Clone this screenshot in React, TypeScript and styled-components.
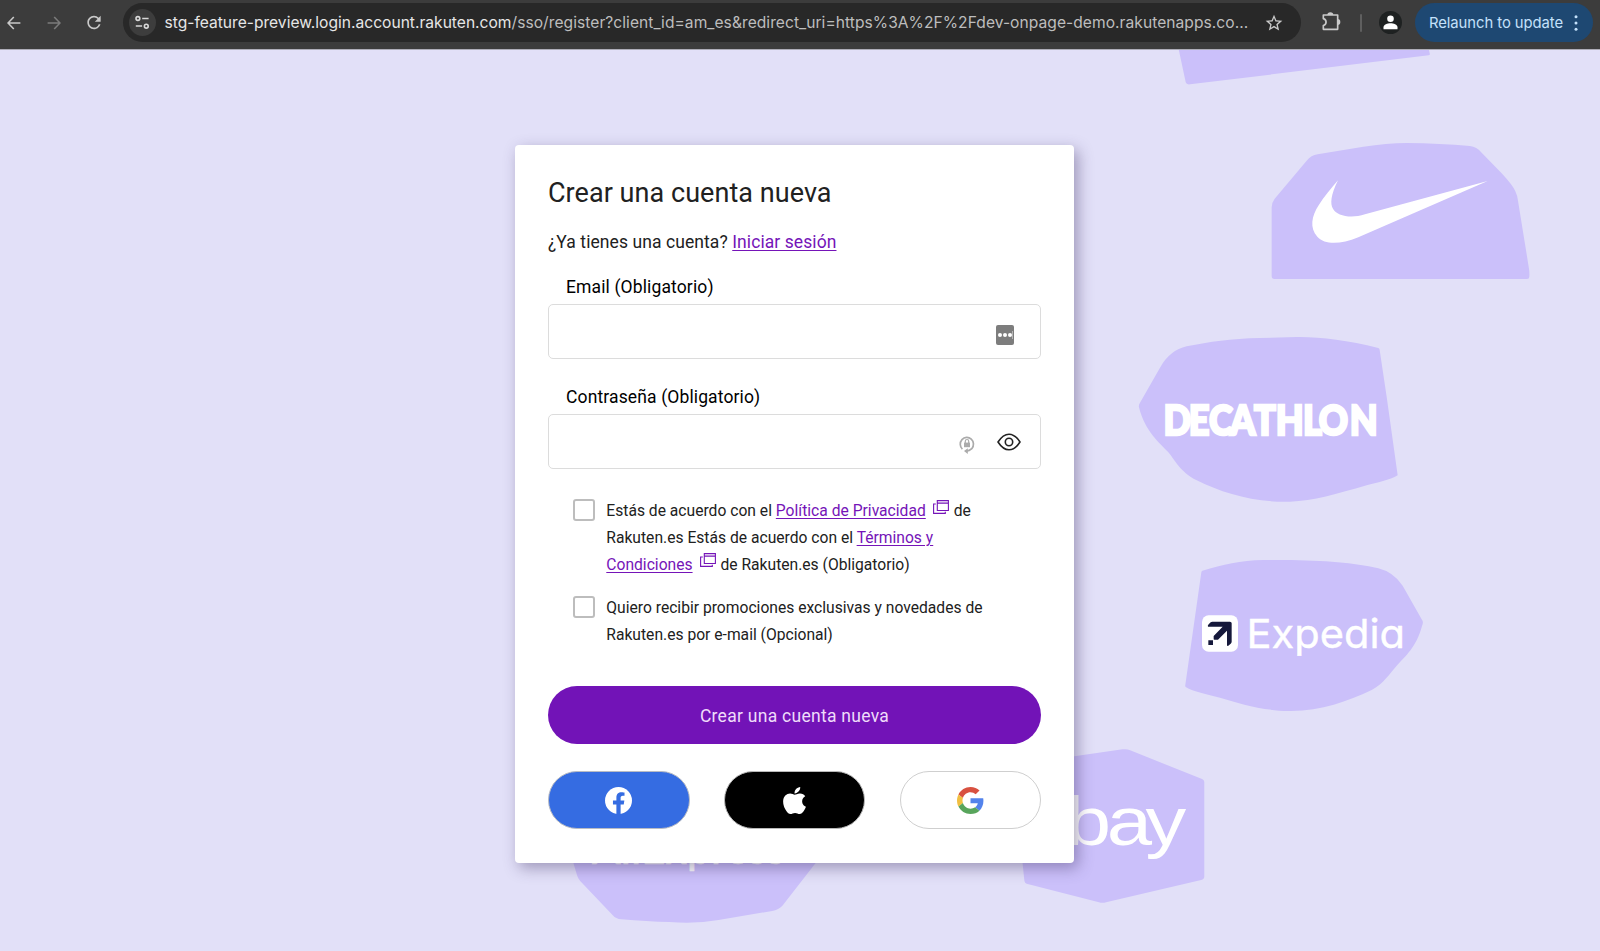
import React from 'react';
import styled, { createGlobalStyle, css } from 'styled-components';
import { FaApple } from 'react-icons/fa';
import { MdRefresh, MdStarBorder } from 'react-icons/md';

const GlobalStyle = createGlobalStyle`
  * { box-sizing: border-box; }
  body { margin: 0; background: #e2e0f8; font-family: Roboto, "Liberation Sans", sans-serif; }
`;

const Page = styled.div`
  width: 1600px;
  height: 951px;
  display: flex;
  flex-direction: column;
  overflow: hidden;
`;

/* ---------- Browser toolbar ---------- */

const Toolbar = styled.header`
  height: 50px;
  flex: none;
  display: flex;
  align-items: flex-start;
  padding: 3px 7px 0 4px;
  background: #3c3c3c;
  border-bottom: 1px solid #aeadb8;
  font-family: Inter, "Liberation Sans", sans-serif;
`;

const NavButtons = styled.nav`
  width: 119px;
  height: 39px;
  display: flex;
  align-items: center;
  gap: 20px;
`;

const NavButton = styled.span<{ $dim?: boolean }>`
  width: 20px;
  height: 20px;
  display: flex;
  align-items: center;
  justify-content: center;
  color: ${(p) => (p.$dim ? '#7b7b7b' : '#c9c9c9')};
`;

const AddressBar = styled.div`
  width: 1178px;
  height: 39px;
  display: flex;
  align-items: center;
  padding: 0 17px 0 6px;
  border-radius: 20px;
  background: #282828;
`;

const SiteInfo = styled.span`
  width: 27px;
  height: 27px;
  flex: none;
  border-radius: 50%;
  background: #3d3d3d;
`;

const Url = styled.span`
  flex: 1;
  margin-left: 8.5px;
  white-space: nowrap;
  font-size: 15.6px;
  line-height: 24px;
  letter-spacing: 0.04px;
  color: #bdbdbd;
`;

const Host = styled.span`
  letter-spacing: 0;
  color: #e6e6e6;
`;

const ToolbarActions = styled.div`
  flex: 1;
  height: 39px;
  display: flex;
  align-items: center;
  color: #c9c9c9;
`;

const ExtensionSlot = styled.span`
  display: flex;
  margin: 0 19px 3px 21px;
`;

const Divider = styled.span`
  width: 2px;
  height: 18px;
  border-radius: 1px;
  background: #5f5f5f;
`;

const Avatar = styled.span`
  width: 23px;
  height: 23px;
  margin: 0 13px 0 17px;
  border-radius: 50%;
  background: #1e2121;
`;

const UpdatePill = styled.button`
  width: 178px;
  height: 39px;
  display: flex;
  align-items: center;
  justify-content: space-between;
  padding: 0 15px 0 14px;
  border: 0;
  border-radius: 20px;
  background: #1e4872;
  color: #c4e1fb;
  font: 400 14.8px/20px Inter, "Liberation Sans", sans-serif;
  letter-spacing: -0.05px;
  white-space: nowrap;
`;

/* ---------- Page body ---------- */

const Stage = styled.main`
  position: relative;
  flex: 1;
  padding: 95px 0 0 515px;
`;

const Backdrop = styled.svg`
  position: absolute;
  inset: 0;
`;

const Card = styled.section`
  position: relative;
  width: 559px;
  height: 718px;
  padding: 30px 33px 0;
  border-radius: 4px;
  background: #fff;
  box-shadow: 4px 5px 15px rgba(62, 48, 98, 0.42);
  color: #212121;
`;

const Title = styled.h1`
  margin: 0;
  font-size: 27px;
  font-weight: 400;
  line-height: 36px;
  letter-spacing: 0.05px;
`;

const Intro = styled.p`
  margin: 19px 0 0;
  font-size: 17.5px;
  line-height: 24px;
  letter-spacing: 0.08px;
`;

const Link = styled.a`
  color: #7514b8;
  text-decoration: underline;
  text-decoration-thickness: 1px;
  text-underline-offset: 2px;
`;

const Field = styled.div<{ $first?: boolean }>`
  display: flex;
  flex-direction: column;
  gap: 5px;
  margin-top: ${(p) => (p.$first ? '21px' : '26px')};
`;

const Label = styled.label`
  padding-left: 18px;
  font-size: 17.5px;
  line-height: 24px;
  letter-spacing: 0.13px;
  color: #000;
`;

const InputBox = styled.div`
  height: 55px;
  display: flex;
  align-items: center;
  justify-content: flex-end;
  gap: 22px;
  padding-right: 19px;
  border: 1px solid #dcdcdc;
  border-radius: 5px;
`;

const ManagerBadge = styled.span`
  width: 18px;
  height: 20px;
  display: flex;
  align-items: center;
  gap: 1px;
  margin: 6px 7px 0 0;
  padding-left: 1.5px;
  border-radius: 2px;
  background: #7d7d7d;
`;

const BadgeDot = styled.i`
  width: 4px;
  height: 4px;
  border-radius: 50%;
  background: #fff;
`;

const BadgeCaret = styled.i`
  width: 1px;
  height: 8px;
  margin-left: -0.8px;
  background: #b5b5b5;
`;

const LockSlot = styled.span`
  display: flex;
  margin-top: 6px;
`;

const Consent = styled.div<{ $top: string }>`
  display: flex;
  align-items: flex-start;
  gap: 11.3px;
  margin-top: ${(p) => p.$top};
  padding-left: 25px;
`;

const Checkbox = styled.span`
  width: 22px;
  height: 22px;
  flex: none;
  margin-top: 0.8px;
  border: 2px solid #bdbdbd;
  border-radius: 3px;
`;

const ConsentText = styled.p`
  width: 386px;
  margin: 0;
  font-size: 15.65px;
  line-height: 26.9px;
`;

const NewWindow = styled.svg`
  margin: 0 1px 0 7px;
  vertical-align: 2.5px;
`;

const Submit = styled.button`
  width: 100%;
  height: 58px;
  display: block;
  margin-top: 37.2px;
  padding: 2px 0 0;
  border: 0;
  border-radius: 30px;
  background: #7213b7;
  color: #efdcfa;
  font: 400 17.5px/24px Roboto, "Liberation Sans", sans-serif;
  letter-spacing: 0.28px;
`;

const SocialRow = styled.div`
  display: flex;
  justify-content: space-between;
  margin-top: 27px;
`;

const tones = {
  facebook: css`background: #356ce2; border-color: #b9bcc4;`,
  apple: css`background: #000; border-color: #b9b9b9;`,
  google: css`background: #fff; border-color: #cfcfcf;`,
};

const SocialButton = styled.button<{ $tone: keyof typeof tones }>`
  width: 141.5px;
  height: 58px;
  display: flex;
  align-items: center;
  justify-content: center;
  padding: 0;
  border: 1px solid;
  border-radius: 29px;
  color: #fff;
  ${(p) => tones[p.$tone]}
`;

/* ---------- Icons ---------- */

const Arrow = ({ flip }: { flip?: boolean }) => (
  <svg width="14" height="14" viewBox="0 0 14 14" fill="none" stroke="currentColor" strokeWidth="1.6">
    <path d={flip ? 'M.6 7H13M7.2 1 13 7l-5.8 6' : 'M13.4 7H1M6.8 1 1 7l5.8 6'} />
  </svg>
);

const TuneIcon = () => (
  <svg width="27" height="27" viewBox="0 0 27 27" fill="none" stroke="#d8d8d8" strokeWidth="1.6">
    <circle cx="8.9" cy="9.5" r="1.9" />
    <path d="M13.2 9.5h6.4M6.8 17h6.3" />
    <circle cx="17.3" cy="17.2" r="1.9" />
  </svg>
);

const PuzzleIcon = () => (
  <svg width="19" height="20" viewBox="246 34 57 60">
    <path d="M250 46H293V89H250V77.5A10.500 10.500 0 0 0 250 57Z" fill="none" stroke="#c9c9c9" strokeWidth="5" strokeLinejoin="round" />
    <path d="M262 46a9 8 0 0 1 18 0ZM293 58a8 9 0 0 1 0 18Z" fill="#c9c9c9" />
  </svg>
);

const PersonIcon = () => (
  <svg width="23" height="23" viewBox="0 0 23 23" fill="#fff">
    <circle cx="11.500" cy="7.7" r="3.3" />
    <path d="M4.500 18.3v-2.100c0-2.700 4-4 7-4s7 1.300 7 4v2.100z" />
  </svg>
);

const DotsIcon = () => (
  <svg width="4" height="16" viewBox="0 0 4 16" fill="currentColor">
    <circle cx="2" cy="1.8" r="1.5" />
    <circle cx="2" cy="8" r="1.5" />
    <circle cx="2" cy="14.2" r="1.5" />
  </svg>
);

const LockCycleIcon = () => (
  <svg width="16" height="20" viewBox="0 0 16 20" fill="none" stroke="#ababab" strokeWidth="1.7">
    <path d="M3.4 14.2A6.600 6.800 0 1 1 12.800 13.700Q10.500 16 7 16.100" />
    <path d="M8.800 13.200v5.800L5 16z" fill="#ababab" stroke="none" />
    <rect x="5" y="7.600" width="6" height="4.600" fill="#ababab" stroke="none" />
    <path d="M6.300 8V6.200a1.700 1.700 0 0 1 3.400 0V8" strokeWidth="1.200" />
  </svg>
);

const EyeIcon = () => (
  <svg width="24" height="18" viewBox="0 0 24 18" fill="none" stroke="#222" strokeWidth="1.6">
    <path d="M1 9C4.500 3.600 8 1.200 12 1.200S19.500 3.600 23 9c-3.500 5.400-7 7.800-11 7.800S4.500 14.400 1 9Z" strokeLinejoin="round" />
    <circle cx="12" cy="9" r="3.700" />
  </svg>
);

const NewWindowIcon = () => (
  <NewWindow width="16" height="14" viewBox="0 0 16 14" fill="none" stroke="#7514b8" strokeWidth="1.1">
    <path d="M4.300.6H15.400V10.500H4.300ZM4.300 3.100H15.400M2.800 4H.6V13.400H12.300V11.800" />
  </NewWindow>
);

const FacebookIcon = () => (
  <svg width="27" height="27" viewBox="0 0 24 24">
    <circle cx="12" cy="12" r="12" fill="#fff" />
    <path fill="#356ce2" d="M16.671 15.469 17.203 12H13.875V9.749c0-.949.465-1.874 1.956-1.874h1.513V4.922s-1.374-.234-2.686-.234c-2.741 0-4.533 1.661-4.533 4.669V12H7.078v3.469h3.047V24h3.750v-8.531z" />
  </svg>
);

const GoogleIcon = () => (
  <svg width="27" height="27" viewBox="0 0 48 48">
    <path fill="#d85140" d="M24 9.500c3.540 0 6.710 1.220 9.210 3.600l6.850-6.850C35.900 2.380 30.470 0 24 0 14.620 0 6.510 5.380 2.560 13.220l7.980 6.190C12.430 13.720 17.740 9.500 24 9.500z" />
    <path fill="#5383ec" d="M46.980 24.550c0-1.570-.15-3.090-.38-4.550H24v9.020h12.940c-.58 2.960-2.260 5.480-4.780 7.180l7.730 6c4.510-4.180 7.090-10.360 7.090-17.650z" />
    <path fill="#f1bf42" d="M10.530 28.590c-.48-1.450-.76-2.990-.76-4.590s.27-3.140.76-4.590l-7.980-6.190C.92 16.460 0 20.120 0 24c0 3.880.92 7.540 2.560 10.780l7.970-6.190z" />
    <path fill="#58a55c" d="M24 48c6.480 0 11.930-2.130 15.890-5.810l-7.730-6c-2.150 1.450-4.920 2.300-8.160 2.300-6.260 0-11.570-4.220-13.470-9.910l-7.980 6.190C6.510 42.620 14.620 48 24 48z" />
  </svg>
);

/* ---------- Brand shapes behind the card ---------- */

const LogoText = styled.text`
  fill: #fff;
  stroke: #fff;
`;

const Decathlon = styled(LogoText)`
  font: 900 42.5px Lato, sans-serif;
  stroke-width: 2.6px;
`;

const Expedia = styled(LogoText)`
  font: 400 40px Inter, sans-serif;
  font-feature-settings: 'cv11';
  stroke-width: 0.4px;
`;

const Ebay = styled(LogoText)`
  font: 400 69px "Liberation Sans", sans-serif;
  stroke-width: 0;
`;

const AliExpress = styled(LogoText)`
  font: 500 42px Lato, sans-serif;
  stroke-width: 0.5px;
`;

const Brands = () => (
  <Backdrop width="1600" height="901" viewBox="0 50 1600 901" fill="#cbc0fa">
    <path transform="translate(1020 0) scale(.3699 .3333)" d="M420 100L429 148L448 247Q450 255 460 253L1105 166Q1109 165 1108 162L1095 100Z" />

    <g transform="translate(1240 130) scale(.33333)">
      <path d="M95 438V232Q95 218 104 206L200 92Q213 76 233 73L370 50Q440 40 500 39Q600 40 690 48Q710 50 725 68L785 130Q820 168 826 184Q832 196 834 212L866 410Q869 425 868 440Q868 447 861 447H103Q95 447 95 438Z" />
      <path fill="#fff" d="M294 151C272 196 270 222 279 236C290 256 330 268 375 253L743 153L355 322C300 344 255 345 232 320C208 294 215 258 236 226C252 199 274 175 294 151Z" />
    </g>

    <path transform="translate(1120 320) scale(.33333)" d="M57 262Q55 256 60 248L120 143Q150 90 200 79C270 65 330 56 420 54L530 51C600 50 680 60 775 84Q779 85 779 90L800 230L833 466C810 480 770 488 740 496C650 522 580 543 510 545C400 548 310 520 230 481C180 456 165 420 145 397C120 370 75 335 57 262Z" />
    <g transform="translate(1165.3 434.6) scale(.85 1)">
      <Decathlon x="-2 27.5 51.500 76 104.500 130 162 180.500 217">DECATHLON</Decathlon>
    </g>

    <g transform="translate(1160 540) scale(.33333)">
      <path d="M127 92C190 74 240 61 310 60L370 60C500 61 580 68 655 85Q700 96 728 137L788 243Q790 250 786 258C770 320 735 350 712 375C690 400 670 432 635 450C560 485 480 515 385 513C300 511 240 490 180 473C140 463 100 455 77 441Q75 440 76 434L124 97Q125 93 127 92Z" />
      <rect x="126" y="226" width="108" height="109" rx="20" fill="#fff" />
      <path fill="#15183a" d="M144 260Q142 257 146 253L152 247Q154 245 157 245H210Q215 245 215 250V305Q215 308 212 311L204 318Q201 319 201 314V272L174 299H163Q161 299 161 296V288L188 260ZM145 301H159V315H145Z" />
    </g>
    <g transform="translate(1246.600 648) scale(1.04 1)">
      <Expedia x="0" y="0">Expedia</Expedia>
    </g>

    <path transform="translate(540 730) scale(.44643 .33333)" d="M1070 106L1197 79L1305 58Q1315 56 1322 61L1483 147Q1488 150 1488 156V440Q1488 447 1481 450L1268 517Q1260 520 1252 517L1090 461Q1086 459 1085 452L1081 400Z" />
    <g transform="translate(1067 845.300) scale(1.180 1)">
      <Ebay x="-36 -1 33.800 66.500">ebay</Ebay>
    </g>

    <path transform="translate(540 730) scale(.44643 .33333)" d="M60 300L75 400L83 436Q85 446 90 453L163 556Q170 567 182 568Q240 575 290 576Q350 582 400 570L520 543Q535 539 543 527L617 400L640 300Z" />
    <AliExpress x="592" y="864" textLength="193">AliExpress</AliExpress>
  </Backdrop>
);

export default function App() {
  return (
    <Page>
      <GlobalStyle />
      <Toolbar>
        <NavButtons>
          <NavButton><Arrow /></NavButton>
          <NavButton $dim><Arrow flip /></NavButton>
          <NavButton><MdRefresh size={21} /></NavButton>
        </NavButtons>
        <AddressBar>
          <SiteInfo><TuneIcon /></SiteInfo>
          <Url>
            <Host>stg-feature-preview.login.account.rakuten.com</Host>
            /sso/register?client_id=am_es&amp;redirect_uri=https%3A%2F%2Fdev-onpage-demo.rakutenapps.co...
          </Url>
          <MdStarBorder size={20} color="#c9c9c9" />
        </AddressBar>
        <ToolbarActions>
          <ExtensionSlot><PuzzleIcon /></ExtensionSlot>
          <Divider />
          <Avatar><PersonIcon /></Avatar>
          <UpdatePill>Relaunch to update <DotsIcon /></UpdatePill>
        </ToolbarActions>
      </Toolbar>

      <Stage>
        <Brands />
        <Card>
          <Title>Crear una cuenta nueva</Title>
          <Intro>¿Ya tienes una cuenta? <Link>Iniciar sesión</Link></Intro>

          <Field $first>
            <Label>Email (Obligatorio)</Label>
            <InputBox>
              <ManagerBadge>
                <BadgeDot /><BadgeDot /><BadgeDot /><BadgeCaret />
              </ManagerBadge>
            </InputBox>
          </Field>
          <Field>
            <Label>Contraseña (Obligatorio)</Label>
            <InputBox>
              <LockSlot><LockCycleIcon /></LockSlot>
              <EyeIcon />
            </InputBox>
          </Field>

          <Consent $top="29px">
            <Checkbox />
            <ConsentText>
              Estás de acuerdo con el <Link>Política de Privacidad</Link><NewWindowIcon /> de Rakuten.es
              Estás de acuerdo con el <Link>Términos y Condiciones</Link><NewWindowIcon /> de Rakuten.es (Obligatorio)
            </ConsentText>
          </Consent>
          <Consent $top="16.6px">
            <Checkbox />
            <ConsentText>
              Quiero recibir promociones exclusivas y novedades de Rakuten.es por e-mail (Opcional)
            </ConsentText>
          </Consent>

          <Submit>Crear una cuenta nueva</Submit>
          <SocialRow>
            <SocialButton $tone="facebook"><FacebookIcon /></SocialButton>
            <SocialButton $tone="apple"><FaApple size={31} /></SocialButton>
            <SocialButton $tone="google"><GoogleIcon /></SocialButton>
          </SocialRow>
        </Card>
      </Stage>
    </Page>
  );
}
